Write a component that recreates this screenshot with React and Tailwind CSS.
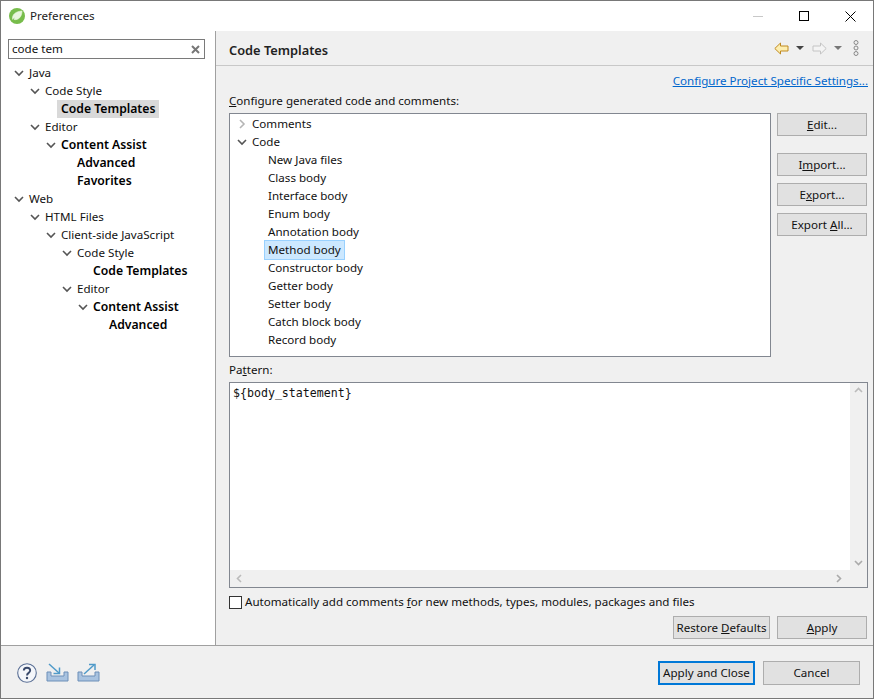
import { useState } from 'react';

const FONT = "font-['Noto_Sans','Open_Sans',sans-serif]";

const PREF_TREE = [
  { label: 'Java', depth: 0, open: true },
  { label: 'Code Style', depth: 1, open: true },
  { label: 'Code Templates', depth: 2, bold: true, selected: true },
  { label: 'Editor', depth: 1, open: true },
  { label: 'Content Assist', depth: 2, open: true, bold: true },
  { label: 'Advanced', depth: 3, bold: true },
  { label: 'Favorites', depth: 3, bold: true },
  { label: 'Web', depth: 0, open: true },
  { label: 'HTML Files', depth: 1, open: true },
  { label: 'Client-side JavaScript', depth: 2, open: true },
  { label: 'Code Style', depth: 3, open: true },
  { label: 'Code Templates', depth: 4, bold: true },
  { label: 'Editor', depth: 3, open: true },
  { label: 'Content Assist', depth: 4, open: true, bold: true },
  { label: 'Advanced', depth: 5, bold: true },
];

const TEMPLATES = ['New Java files', 'Class body', 'Interface body', 'Enum body', 'Annotation body', 'Method body', 'Constructor body', 'Getter body', 'Setter body', 'Catch block body', 'Record body'];

function Chevron({ open, light }) {
  return (
    <svg width="10" height="10" viewBox="0 0 10 10" className="shrink-0">
      {open
        ? <path d="M1 3 L5 7 L9 3" fill="none" stroke="#555" strokeWidth="1.6" />
        : <path d="M3 1 L7 5 L3 9" fill="none" stroke={light ? '#b5b5b5' : '#555'} strokeWidth="1.6" />}
    </svg>
  );
}

function Btn({ children, className = '' }) {
  return (
    <button className={`h-[23px] bg-[#e1e1e1] border border-[#adadad] text-[11.6px] text-[#111] flex items-center justify-center ${className}`}>
      {children}
    </button>
  );
}

function Arrow({ dir, color, fill }) {
  return (
    <svg width="15" height="13" viewBox="0 0 15 13">
      <path
        d={dir === 'left' ? 'M0.8 6.5 L6.5 1 V4 H14 V9 H6.5 V12 Z' : 'M14.2 6.5 L8.5 1 V4 H1 V9 H8.5 V12 Z'}
        fill={fill} stroke={color} strokeWidth="1"
      />
    </svg>
  );
}

function Tray({ up }) {
  return (
    <svg width="23" height="20" viewBox="0 0 23 20">
      <path d="M1 9 H5 V13 H18 V9 H22 V18 H1 Z" fill="#a9c3e0" stroke="#6d8fb8" strokeWidth="1" />
      {up
        ? <g stroke="#4f9ac9" strokeWidth="1.5" fill="none"><path d="M7 11 L17 2" /><path d="M12 1.5 H18 V7" /></g>
        : <g stroke="#4f9ac9" strokeWidth="1.5" fill="none"><path d="M3 1 L13 10" /><path d="M13.5 4.5 V10.5 H7.5" /></g>}
    </svg>
  );
}

export default function App() {
  const [query] = useState('code tem');

  return (
    <div className={`${FONT} w-[874px] h-[699px] flex flex-col border border-[#787878] bg-[#f0f0f0] text-[11.6px] leading-[18px] text-[#111] overflow-hidden`}>
      {/* title bar */}
      <div className="h-[30px] shrink-0 bg-white flex items-center">
        <svg width="16" height="16" viewBox="0 0 16 16" className="ml-[8px] -mt-[1px]">
          <circle cx="8" cy="8" r="8" fill="#77bc4b" />
          <path d="M3.5 11.5 C3 6 7 3.5 13 3 C13 8.5 9.5 12.5 5 11.5 C6 8.5 8 7 10 6" fill="#e8f5dc" stroke="#e8f5dc" strokeWidth="0.6" />
        </svg>
        <span className="ml-[5px] text-[#222]">Preferences</span>
        <div className="ml-auto flex items-center">
          <div className="w-[46px] h-[30px] flex items-center justify-center"><div className="w-[10px] h-px bg-[#c8c8c8]" /></div>
          <div className="w-[46px] h-[30px] flex items-center justify-center"><div className="w-[10px] h-[10px] border border-black" /></div>
          <div className="w-[46px] h-[30px] flex items-center justify-center">
            <svg width="11" height="11" viewBox="0 0 11 11"><path d="M0.5 0.5 L10.5 10.5 M10.5 0.5 L0.5 10.5" stroke="#000" strokeWidth="1" /></svg>
          </div>
        </div>
      </div>

      <div className="flex-1 flex min-h-0">
        {/* left: filter + tree */}
        <div className="w-[215px] shrink-0 bg-white border-r border-[#a0a0a0] pt-[8px]">
          <div className="ml-[7px] w-[197px] h-[20px] border border-[#7a7a7a] flex items-center pl-[3px] pr-[4px] text-[#111]">
            <span>{query}</span>
            <svg width="9" height="9" viewBox="0 0 9 9" className="ml-auto"><path d="M1 1 L8 8 M8 1 L1 8" stroke="#777" strokeWidth="2" /></svg>
          </div>
          <div className="mt-[5px]">
            {PREF_TREE.map((n, i) => (
              <div key={i} className="h-[18px] flex items-center" style={{ paddingLeft: 13 + n.depth * 16 }}>
                <span className="w-[16px] shrink-0">{n.open && <Chevron open />}</span>
                <span className={`px-[4px] -ml-[5px] ${n.bold ? 'font-semibold text-black text-[12.2px]' : ''} ${n.selected ? 'bg-[#d9d9d9]' : ''}`}>{n.label}</span>
              </div>
            ))}
          </div>
        </div>

        {/* right: page */}
        <div className="flex-1 min-w-0 flex flex-col">
          <div className="h-[35px] shrink-0 border-b border-[#c8c8c8] flex items-center pl-[13px] pr-[14px]">
            <span className="mt-[3px] text-[12.8px] font-semibold text-[#222]">Code Templates</span>
            <div className="ml-auto flex items-center">
              <Arrow dir="left" color="#c08a20" fill="#fdeeb0" />
              <svg width="8" height="4" viewBox="0 0 8 4" className="ml-[7px]"><path d="M0 0 H8 L4 4 Z" fill="#444" /></svg>
              <span className="ml-[8px]"><Arrow dir="right" color="#c4c4c4" fill="#f4f4f4" /></span>
              <svg width="8" height="4" viewBox="0 0 8 4" className="ml-[7px]"><path d="M0 0 H8 L4 4 Z" fill="#777" /></svg>
              <svg width="6" height="16" viewBox="0 0 6 16" className="ml-[11px]">
                <circle cx="3" cy="2.5" r="2" fill="none" stroke="#888" />
                <circle cx="3" cy="8" r="2" fill="none" stroke="#888" />
                <circle cx="3" cy="13.5" r="2" fill="none" stroke="#888" />
              </svg>
            </div>
          </div>

          <div className="flex-1 min-h-0 flex flex-col pl-[13px] pr-[5px]">
            <div className="h-[26px] pt-[4px] shrink-0 flex items-center justify-end">
              <span className="text-[#0066cc] underline leading-[16px]">Configure Project Specific Settings...</span>
            </div>
            <div className="h-[18px] shrink-0 flex items-center"><span><u>C</u>onfigure generated code and comments:</span></div>
            <div className="mt-[3px] h-[244px] shrink-0 flex">
              <div className="w-[542px] border border-[#828790] bg-white pt-[1px]">
                <div className="h-[18px] flex items-center pl-[7px]"><span className="w-[15px]"><Chevron light /></span>Comments</div>
                <div className="h-[18px] flex items-center pl-[7px]"><span className="w-[15px]"><Chevron open /></span>Code</div>
                {TEMPLATES.map(t => (
                  <div key={t} className="h-[18px] flex items-center pl-[34px]">
                    <span className={`px-[3px] border ${t === 'Method body' ? 'bg-[#cce8ff] border-[#99d1ff]' : 'border-transparent'}`}>{t}</span>
                  </div>
                ))}
              </div>
              <div className="ml-[6px] w-[90px] flex flex-col">
                <Btn className="w-full"><span><u>E</u>dit...</span></Btn>
                <Btn className="w-full mt-[17px]"><span>I<u>m</u>port...</span></Btn>
                <Btn className="w-full mt-[7px]"><span>E<u>x</u>port...</span></Btn>
                <Btn className="w-full mt-[7px]"><span>Export <u>A</u>ll...</span></Btn>
              </div>
            </div>
            <div className="mt-[4px] h-[18px] shrink-0 flex items-center"><span>Pa<u>t</u>tern:</span></div>
            <div className="mt-[3px] h-[206px] shrink-0 border border-[#828790] bg-white flex flex-col">
              <div className="flex-1 min-h-0 flex">
                <div className="flex-1 pl-[3px] pt-[1px] font-['DejaVu_Sans_Mono',monospace] text-[11.6px] text-[#111]">{'${body_statement}'}</div>
                <div className="w-[17px] bg-[#f0f0f0] flex flex-col items-center justify-between py-[4px]">
                  <svg width="9" height="6" viewBox="0 0 9 6"><path d="M1 5 L4.5 1.5 L8 5" fill="none" stroke="#bbb" strokeWidth="1.6" /></svg>
                  <svg width="9" height="6" viewBox="0 0 9 6"><path d="M1 1 L4.5 4.5 L8 1" fill="none" stroke="#aaa" strokeWidth="1.6" /></svg>
                </div>
              </div>
              <div className="h-[17px] shrink-0 bg-[#f0f0f0] flex items-center justify-between pl-[6px] pr-[25px]">
                <svg width="6" height="9" viewBox="0 0 6 9"><path d="M5 1 L1.5 4.5 L5 8" fill="none" stroke="#bbb" strokeWidth="1.6" /></svg>
                <svg width="6" height="9" viewBox="0 0 6 9"><path d="M1 1 L4.5 4.5 L1 8" fill="none" stroke="#aaa" strokeWidth="1.6" /></svg>
              </div>
            </div>
            <div className="mt-[5px] h-[18px] shrink-0 flex items-center">
              <div className="w-[13px] h-[13px] border border-[#333] bg-white mr-[3px]" />
              <span>Automatically add comments <u>f</u>or new methods, types, modules, packages and files</span>
            </div>
            <div className="mt-[5px] shrink-0 flex justify-end pr-[1px]">
              <Btn className="w-[97px]"><span>Restore <u>D</u>efaults</span></Btn>
              <Btn className="w-[90px] ml-[7px]"><span><u>A</u>pply</span></Btn>
            </div>
          </div>
        </div>
      </div>

      {/* bottom bar */}
      <div className="h-[53px] shrink-0 border-t border-[#a0a0a0] flex items-center pl-[16px] pr-[13px] pt-[1px]">
        <svg width="20" height="20" viewBox="0 0 20 20">
          <circle cx="10" cy="10" r="9.3" fill="#f4f6fa" stroke="#5a6f95" strokeWidth="1.1" />
          <path d="M6.8 7.6 C6.8 3.8 13.2 3.8 13.2 7.6 C13.2 10 10 9.8 10 12.4" fill="none" stroke="#39496b" strokeWidth="1.9" />
          <circle cx="10" cy="15" r="1.2" fill="#39496b" />
        </svg>
        <span className="ml-[9px]"><Tray /></span>
        <span className="ml-[8px]"><Tray up /></span>
        <div className="ml-auto flex items-center">
          <button className="w-[97px] h-[24px] bg-[#e1e1e1] border-2 border-[#0078d7] text-[11.6px] text-[#111]">Apply and Close</button>
          <button className="w-[97px] h-[24px] ml-[8px] bg-[#e1e1e1] border border-[#adadad] text-[11.6px] text-[#111]">Cancel</button>
        </div>
      </div>
    </div>
  );
}
